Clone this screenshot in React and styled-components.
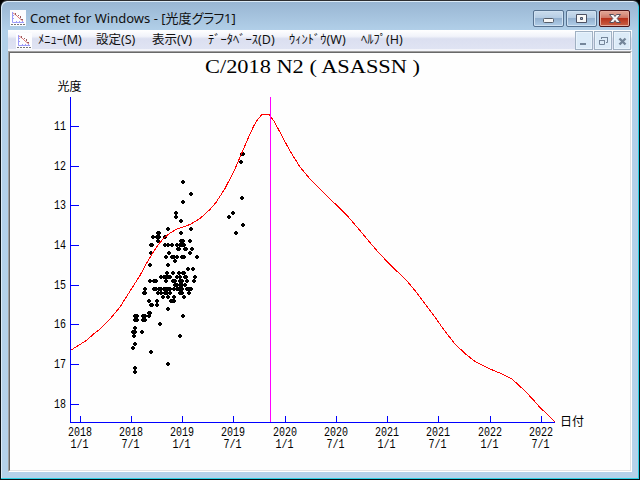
import React from "react";
import styled, { createGlobalStyle } from "styled-components";

const GlobalStyle = createGlobalStyle`
    * {
        box-sizing: border-box;
    }

    body {
        margin: 0;
        background: #000;
        overflow: hidden;
    }
`;

const Window = styled.div`
    display: flex;
    flex-direction: column;
    width: 640px;
    height: 480px;
    padding: 0 7px 7px 7px;
    border: 1px solid #0b1216;
    border-top-color: #2d2d30;
    border-radius: 7px 7px 0 0;
    background: linear-gradient(#98b5d2 0, #b2d0e9 30px, #b5d2ea 100%);
    box-shadow: inset -1px -1px 0 #2cd0e4, inset 1px 1px 0 #dcebf7;
    font-family: "Noto Sans", "Noto Sans CJK JP", sans-serif;
    color: #111;
`;

const TitleBar = styled.div`
    display: flex;
    align-items: center;
    height: 29px;
    padding: 5px 2px 0 2px;
    flex-shrink: 0;
`;

const WindowTitle = styled.div`
    flex: 1;
    margin: 0 0 0 4px;
    font-size: 13px;
    line-height: 18px;
    white-space: nowrap;
`;

const NarrowKana = styled.span`
    letter-spacing: -2.5px;
    margin-right: 1px;
`;

const CaptionButtons = styled.div`
    display: flex;
    gap: 2px;
    margin-top: 1px;
`;

const CaptionButton = styled.div`
    display: flex;
    width: 31px;
    height: 17px;
    border: 1px solid ${({ $close }) => ($close ? "#4c1418" : "#56718f")};
    border-radius: 2px;
    background: ${({ $close }) =>
        $close
            ? "linear-gradient(#dd9c8c 0 15%, #cd7362 48%, #b8311b 50%, #c96347)"
            : "linear-gradient(#c5d8ea 0 15%, #b3cbe3 48%, #93b0cf 50%, #b1cee8)"};
    box-shadow: inset 0 0 0 1px
        ${({ $close }) => ($close ? "#e5a99b" : "#cfe1f2")};
`;

const MenuBar = styled.div`
    display: flex;
    align-items: center;
    height: 21px;
    padding: 0 1px 0 8px;
    background: linear-gradient(#fff 0, #f1f3fa 30%, #dbdff0 42%, #e0e4f3 90%, #f3f4fa 92%);
    flex-shrink: 0;
`;

const MenuItems = styled.div`
    display: flex;
    flex: 1;
    gap: 14px;
    margin: -1px 0 0 6px;
`;

const MenuItem = styled.div`
    width: ${({ $width }) => $width}px;
    font-size: 12.5px;
    line-height: 18px;
    white-space: nowrap;
`;

const MdiButtons = styled.div`
    display: flex;
    gap: 1px;
`;

const MdiButton = styled.div`
    display: flex;
    width: 18px;
    height: 19px;
    border: 1px solid #9fb0c2;
    background: #dcebf8;
    box-shadow: inset 0 0 0 1px #e9f3fc;
`;

const Client = styled.div`
    flex: 1;
    min-height: 0;
    border: 1px solid #a0a0a0;
    border-right-color: #fff;
    border-bottom-color: #fff;
`;

const ClientInner = styled.div`
    height: 100%;
    border: 1px solid #696969;
    border-right-color: #e3e3e3;
    border-bottom-color: #e3e3e3;
    background: #fefefe;
`;

const Chart = styled.svg`
    display: block;
    width: 620px;
    height: 417px;
`;

const ChartTitle = styled.text`
    font-family: "Liberation Serif", serif;
    font-size: 18.5px;
`;

const AxisName = styled.text`
    font-family: "Noto Sans CJK JP", sans-serif;
    font-size: 12px;
`;

const TickLabel = styled.text`
    font-family: "Liberation Mono", monospace;
    font-size: 12px;
    text-anchor: middle;
`;

const AppIconSvg = styled.svg`
    display: block;
    width: 16px;
    height: 16px;
    flex-shrink: 0;
`;

const menus = [
    { label: "ﾒﾆｭｰ(M)", width: 44 },
    { label: "設定(S)", width: 42 },
    { label: "表示(V)", width: 42 },
    { label: "ﾃﾞｰﾀﾍﾞｰｽ(D)", width: 67 },
    { label: "ｳｨﾝﾄﾞｳ(W)", width: 58 },
    { label: "ﾍﾙﾌﾟ(H)", width: 44 },
];

const magnitudes = [
    [11, 126],
    [12, 166],
    [13, 205],
    [14, 245],
    [15, 285],
    [16, 324],
    [17, 364],
    [18, 404],
];

const dates = [
    ["2018", "1/1", 80],
    ["2018", "7/1", 131],
    ["2019", "1/1", 182],
    ["2019", "7/1", 233],
    ["2020", "1/1", 285],
    ["2020", "7/1", 336],
    ["2021", "1/1", 387],
    ["2021", "7/1", 438],
    ["2022", "1/1", 490],
    ["2022", "7/1", 541],
];

// [y, [x, x, ...]]
const observations = [
    [154, [242, 243]],
    [162, [241]],
    [182, [183]],
    [194, [191]],
    [198, [242]],
    [202, [183]],
    [213, [176, 233]],
    [217, [176, 229]],
    [221, [181]],
    [225, [243]],
    [229, [168, 191]],
    [233, [158, 159, 181, 236]],
    [237, [153, 157, 159, 165]],
    [241, [158, 181, 183, 190]],
    [245, [151, 152, 165, 168, 172, 177, 180, 182, 184]],
    [249, [178, 179, 185, 186, 192]],
    [253, [151, 169, 190]],
    [257, [166, 172, 174, 177, 182, 184, 197]],
    [261, [175]],
    [265, [150, 168]],
    [269, [188, 193]],
    [273, [167, 173, 179, 183, 184]],
    [277, [161, 164, 166, 168, 170, 177, 180, 185, 186, 195]],
    [281, [150, 154, 156, 166, 173, 175, 180, 182, 187, 194]],
    [285, [175, 177, 180, 182, 185]],
    [289, [145, 154, 156, 159, 161, 164, 166, 168, 170, 174, 177, 179, 181, 182, 187, 189, 191]],
    [293, [144, 145, 158, 161, 165, 167, 170, 180, 182, 189]],
    [297, [163, 168, 174, 184]],
    [301, [149, 157, 171, 173, 174]],
    [305, [151, 152, 157]],
    [309, [168]],
    [313, [149, 150]],
    [316, [135, 137, 143, 145, 149, 183]],
    [320, [135, 137, 143, 145]],
    [324, [160]],
    [328, [135]],
    [332, [133, 135, 142]],
    [336, [134, 180]],
    [344, [135]],
    [348, [133]],
    [352, [151]],
    [364, [168]],
    [368, [135]],
    [372, [135]],
];

const curve = [
    [71, 350], [76, 347], [87, 340], [93, 334.5], [100, 329], [110, 319],
    [120, 307], [132, 288], [140, 275.5], [145, 266], [152, 254], [158, 245],
    [164, 238], [170, 233], [176, 229.5], [180, 228], [190, 224.5],
    [200, 218.5], [210, 209.5], [216, 202.5], [225, 188.5], [235, 169],
    [242, 152.5], [248, 138.5], [254, 125.5], [258, 119], [262, 114.5],
    [269, 114.5], [274, 121], [282, 136], [290, 151], [300, 167], [310, 179],
    [315, 184], [328, 197], [340, 208.5], [347, 215.5], [357, 227],
    [367, 239], [378, 252], [390, 264.5], [407, 281], [417, 293],
    [427, 306.5], [436, 318.5], [444, 330], [455, 344], [465, 353.5],
    [475, 361.5], [490, 369], [502, 374], [512, 379], [525, 391],
    [533, 399.5], [540, 407.5], [548, 415], [555, 422],
];

const dotPath = observations
    .flatMap(([y, xs]) =>
        xs.map((x) => `M${x - 2} ${y - 1}h1v-1h2v1h1v2h-1v1h-2v-1h-1z`)
    )
    .join("");

function AppIcon() {
    return (
        <AppIconSvg viewBox="0 0 16 16">
            <rect width="16" height="16" fill="#fdfdff" />
            <path d="M2.5 2v10.5H14" fill="none" stroke="#9c9cf8" />
            <path d="M3 5.5h1M3 8.5h1M6.5 11v1M9.5 11v1M12.5 11v1" stroke="#9c9cf8" />
            <path d="M3 3l3 2 3 3 4 3" fill="none" stroke="#e07c7c" />
            <path d="M5 3h1v2H5zM8 5h1v1H8zM10 6h1v2h-1zM11 9h2v1h-2z" fill="#9a5c5c" />
            <path d="M1 14.5h14" stroke="#777" strokeDasharray="2 1" />
        </AppIconSvg>
    );
}

function LightCurve() {
    return (
        <Chart viewBox="10 53 620 417">
            <ChartTitle x="205" y="73" textLength="215" lengthAdjust="spacingAndGlyphs">
                C/2018 N2 ( ASASSN )
            </ChartTitle>
            <AxisName x="57.5" y="91">光度</AxisName>
            <AxisName x="560" y="426">日付</AxisName>

            {magnitudes.map(([mag, y]) => (
                <TickLabel key={mag} x="60" y={y + 4} textLength="12" lengthAdjust="spacingAndGlyphs">
                    {mag}
                </TickLabel>
            ))}
            {dates.map(([year, day, x]) => (
                <g key={x}>
                    <TickLabel x={x} y="436" textLength="24" lengthAdjust="spacingAndGlyphs">
                        {year}
                    </TickLabel>
                    <TickLabel x={x - 0.5} y="448" textLength="18" lengthAdjust="spacingAndGlyphs">
                        {day}
                    </TickLabel>
                </g>
            ))}

            <g shapeRendering="crispEdges">
                <path d={dotPath} fill="#000" />
                <polyline
                    points={curve.map((p) => p.join(",")).join(" ")}
                    fill="none"
                    stroke="#f00"
                />
                <path
                    d={
                        "M70.5 97V422.5H555" +
                        magnitudes.map(([, y]) => `M70 ${y + 0.5}h9`).join("") +
                        dates.map(([, , x]) => `M${x + 0.5} 416v6`).join("")
                    }
                    fill="none"
                    stroke="#00f"
                />
                <path d="M270.5 97v325" stroke="#f0f" />
            </g>
        </Chart>
    );
}

function App() {
    return (
        <>
            <GlobalStyle />
            <Window>
                <TitleBar>
                    <AppIcon />
                    <WindowTitle>
                        Comet for Windows - [光度<NarrowKana>グラフ</NarrowKana>1]
                    </WindowTitle>
                    <CaptionButtons>
                        <CaptionButton>
                            <svg width="29" height="15">
                                <rect x="9.5" y="7.5" width="10" height="4" rx="1" fill="#f7f7f7" stroke="#555d69" />
                            </svg>
                        </CaptionButton>
                        <CaptionButton>
                            <svg width="29" height="15">
                                <path d="M9.5 3.5h10v8h-10zM13.5 6.5v2h2v-2z" fill="#f7f7f7" stroke="#4c5163" fillRule="evenodd" />
                            </svg>
                        </CaptionButton>
                        <CaptionButton $close>
                            <svg width="29" height="15">
                                <path
                                    d="M9.5 3.5h4l1.5 2 1.5-2h4l-3.3 4 3.3 4h-4l-1.5-2-1.5 2h-4l3.3-4z"
                                    fill="#f7f7f7"
                                    stroke="#57505c"
                                />
                            </svg>
                        </CaptionButton>
                    </CaptionButtons>
                </TitleBar>
                <MenuBar>
                    <AppIcon />
                    <MenuItems>
                        {menus.map((menu) => (
                            <MenuItem key={menu.label} $width={menu.width}>
                                {menu.label}
                            </MenuItem>
                        ))}
                    </MenuItems>
                    <MdiButtons>
                        <MdiButton>
                            <svg width="16" height="17">
                                <path d="M4 12h6" stroke="#75869a" strokeWidth="2" />
                            </svg>
                        </MdiButton>
                        <MdiButton>
                            <svg width="16" height="17" fill="none" stroke="#75869a">
                                <path d="M6.5 7V5.5h6v5H11M6 5.5h7M4.5 8.5h5v4h-5zM4 8.5h6" />
                            </svg>
                        </MdiButton>
                        <MdiButton>
                            <svg width="16" height="17">
                                <path d="M5.5 6.5l6 6M11.5 6.5l-6 6" stroke="#75869a" strokeWidth="2.4" />
                            </svg>
                        </MdiButton>
                    </MdiButtons>
                </MenuBar>
                <Client>
                    <ClientInner>
                        <LightCurve />
                    </ClientInner>
                </Client>
            </Window>
        </>
    );
}

export default App;
